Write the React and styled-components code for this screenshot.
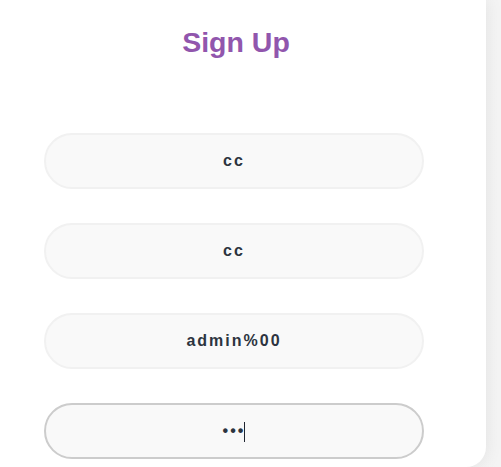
import styled, { createGlobalStyle } from "styled-components";

const GlobalStyle = createGlobalStyle`
  html, body {
    margin: 0;
    padding: 0;
    background: linear-gradient(to right, #e9e9e9, #f4f4f4);
    font-family: "Liberation Sans", Arial, sans-serif;
    overflow: hidden;
  }
`;

const Card = styled.div`
  width: 486px;
  height: 467px;
  box-sizing: border-box;
  background: #fff;
  border-radius: 0 0 20px 0;
  box-shadow: 0 0 18px rgba(0, 0, 0, 0.08);
  padding: 26px 62px 0 44px;
`;

const Title = styled.h2`
  margin: 0 0 75px;
  padding-left: 4px;
  text-align: center;
  font-size: 28.5px;
  line-height: 32px;
  font-weight: bold;
  color: #9156ad;
`;

const Form = styled.form`
  display: flex;
  flex-direction: column;
  gap: 34px;
`;

const FieldWrap = styled.div`
  position: relative;
  width: 380px;
`;

const Field = styled.input`
  box-sizing: border-box;
  width: 380px;
  height: 56px;
  border-radius: 28px;
  border: 2px solid ${(p) => (p.$focused ? "#cccccc" : "#f1f1f1")};
  background: #f9f9f9;
  outline: none;
  text-align: center;
  font-family: "Liberation Sans", Arial, sans-serif;
  font-size: 16px;
  font-weight: bold;
  letter-spacing: 2px;
  color: #2c3440;
  caret-color: transparent;
`;

const Caret = styled.span`
  position: absolute;
  left: 200px;
  top: 19px;
  width: 1px;
  height: 20px;
  background: #1f2530;
`;

export default function App() {
  return (
    <>
      <GlobalStyle />
      <Card>
        <Title>Sign Up</Title>
        <Form onSubmit={(e) => e.preventDefault()}>
          <Field type="text" defaultValue="cc" />
          <Field type="text" defaultValue="cc" />
          <Field type="text" defaultValue="admin%00" />
          <FieldWrap>
            <Field type="password" defaultValue="abc" $focused />
            <Caret />
          </FieldWrap>
        </Form>
      </Card>
    </>
  );
}
